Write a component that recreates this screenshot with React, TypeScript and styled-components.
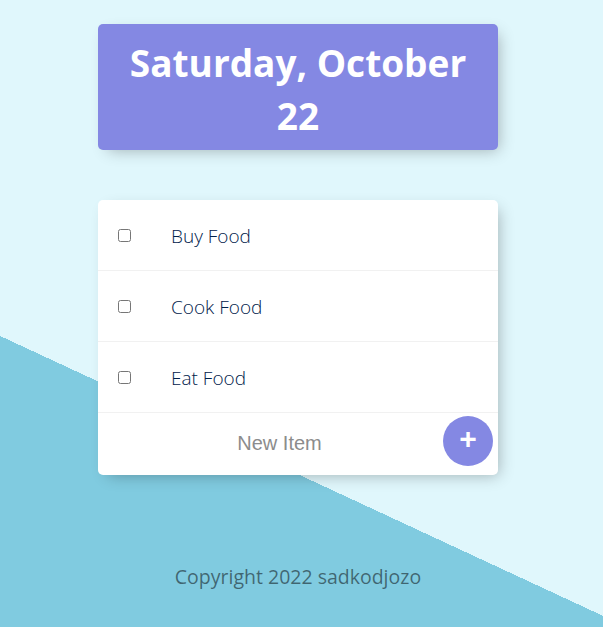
import React from "react";
import styled, { createGlobalStyle } from "styled-components";

const GlobalStyle = createGlobalStyle`
  html, body {
    margin: 0;
    padding: 0;
  }
  body {
    min-height: 100vh;
    font-family: "Open Sans", "Noto Sans", sans-serif;
    background-color: #e0f7fc;
    background-image: linear-gradient(204.9deg, #e0f7fc 558.6px, #80cbe0 558.6px);
    background-repeat: no-repeat;
  }
`;

const Page = styled.div`
  display: flex;
  flex-direction: column;
  align-items: center;
  padding-top: 24px;
  padding-right: 7px;
`;

const HeadingBox = styled.div`
  width: 400px;
  box-sizing: border-box;
  background: #8488e3;
  border-radius: 5px;
  box-shadow: 5px 5px 15px -5px rgba(0, 0, 0, 0.3);
  text-align: center;
  padding: 12px 10px 8px;
`;

const Title = styled.h1`
  margin: 0;
  color: #ffffff;
  font-size: 37px;
  font-weight: 700;
  line-height: 53px;
`;

const Card = styled.div`
  width: 400px;
  margin-top: 50px;
  background: #ffffff;
  border-radius: 5px;
  box-shadow: 5px 5px 15px -5px rgba(0, 0, 0, 0.3);
`;

const Item = styled.div`
  min-height: 70px;
  display: flex;
  align-items: center;
  border-bottom: 1px solid #f1f1f1;
`;

const Check = styled.input`
  margin: 20px;
  width: 13px;
  height: 13px;
`;

const ItemText = styled.p`
  margin: 0;
  padding: 21px 20px 19px;
  font-size: 19px;
  font-weight: 300;
  color: #00204a;
`;

const Form = styled.form`
  height: 62px;
  display: flex;
  align-items: flex-start;
  justify-content: flex-start;
  margin-left: 20px;
  padding-left: 5px;
  gap: 7px;
`;

const NewInput = styled.input`
  width: 313px;
  height: 60px;
  box-sizing: border-box;
  border: none;
  background: transparent;
  text-align: center;
  font-family: "Liberation Sans", Arial, sans-serif;
  font-size: 20px;
  padding: 0;
  margin: 0;
  &::placeholder {
    color: #8c8c8c;
    opacity: 1;
  }
  &:focus {
    outline: none;
  }
`;

const AddButton = styled.button`
  width: 50px;
  height: 50px;
  margin-top: 3px;
  border-radius: 50%;
  border: 0;
  background: #8488e3;
  color: #ffffff;
  font-family: "Liberation Sans", Arial, sans-serif;
  font-size: 30px;
  font-weight: 700;
  line-height: 1;
  padding: 0 0 4px;
  display: flex;
  align-items: center;
  justify-content: center;
`;

const Footer = styled.footer`
  margin-top: 88px;
  color: rgba(0, 0, 0, 0.5);
  font-size: 19.5px;
  text-align: center;
`;

const items = ["Buy Food", "Cook Food", "Eat Food"];

export default function App() {
  return (
    <>
      <GlobalStyle />
      <Page>
        <HeadingBox>
          <Title>Saturday, October 22</Title>
        </HeadingBox>
        <Card>
          {items.map((t) => (
            <Item key={t}>
              <Check type="checkbox" />
              <ItemText>{t}</ItemText>
            </Item>
          ))}
          <Form onSubmit={(e) => e.preventDefault()}>
            <NewInput type="text" placeholder="New Item" autoComplete="off" />
            <AddButton type="submit">+</AddButton>
          </Form>
        </Card>
        <Footer>Copyright 2022 sadkodjozo</Footer>
      </Page>
    </>
  );
}
